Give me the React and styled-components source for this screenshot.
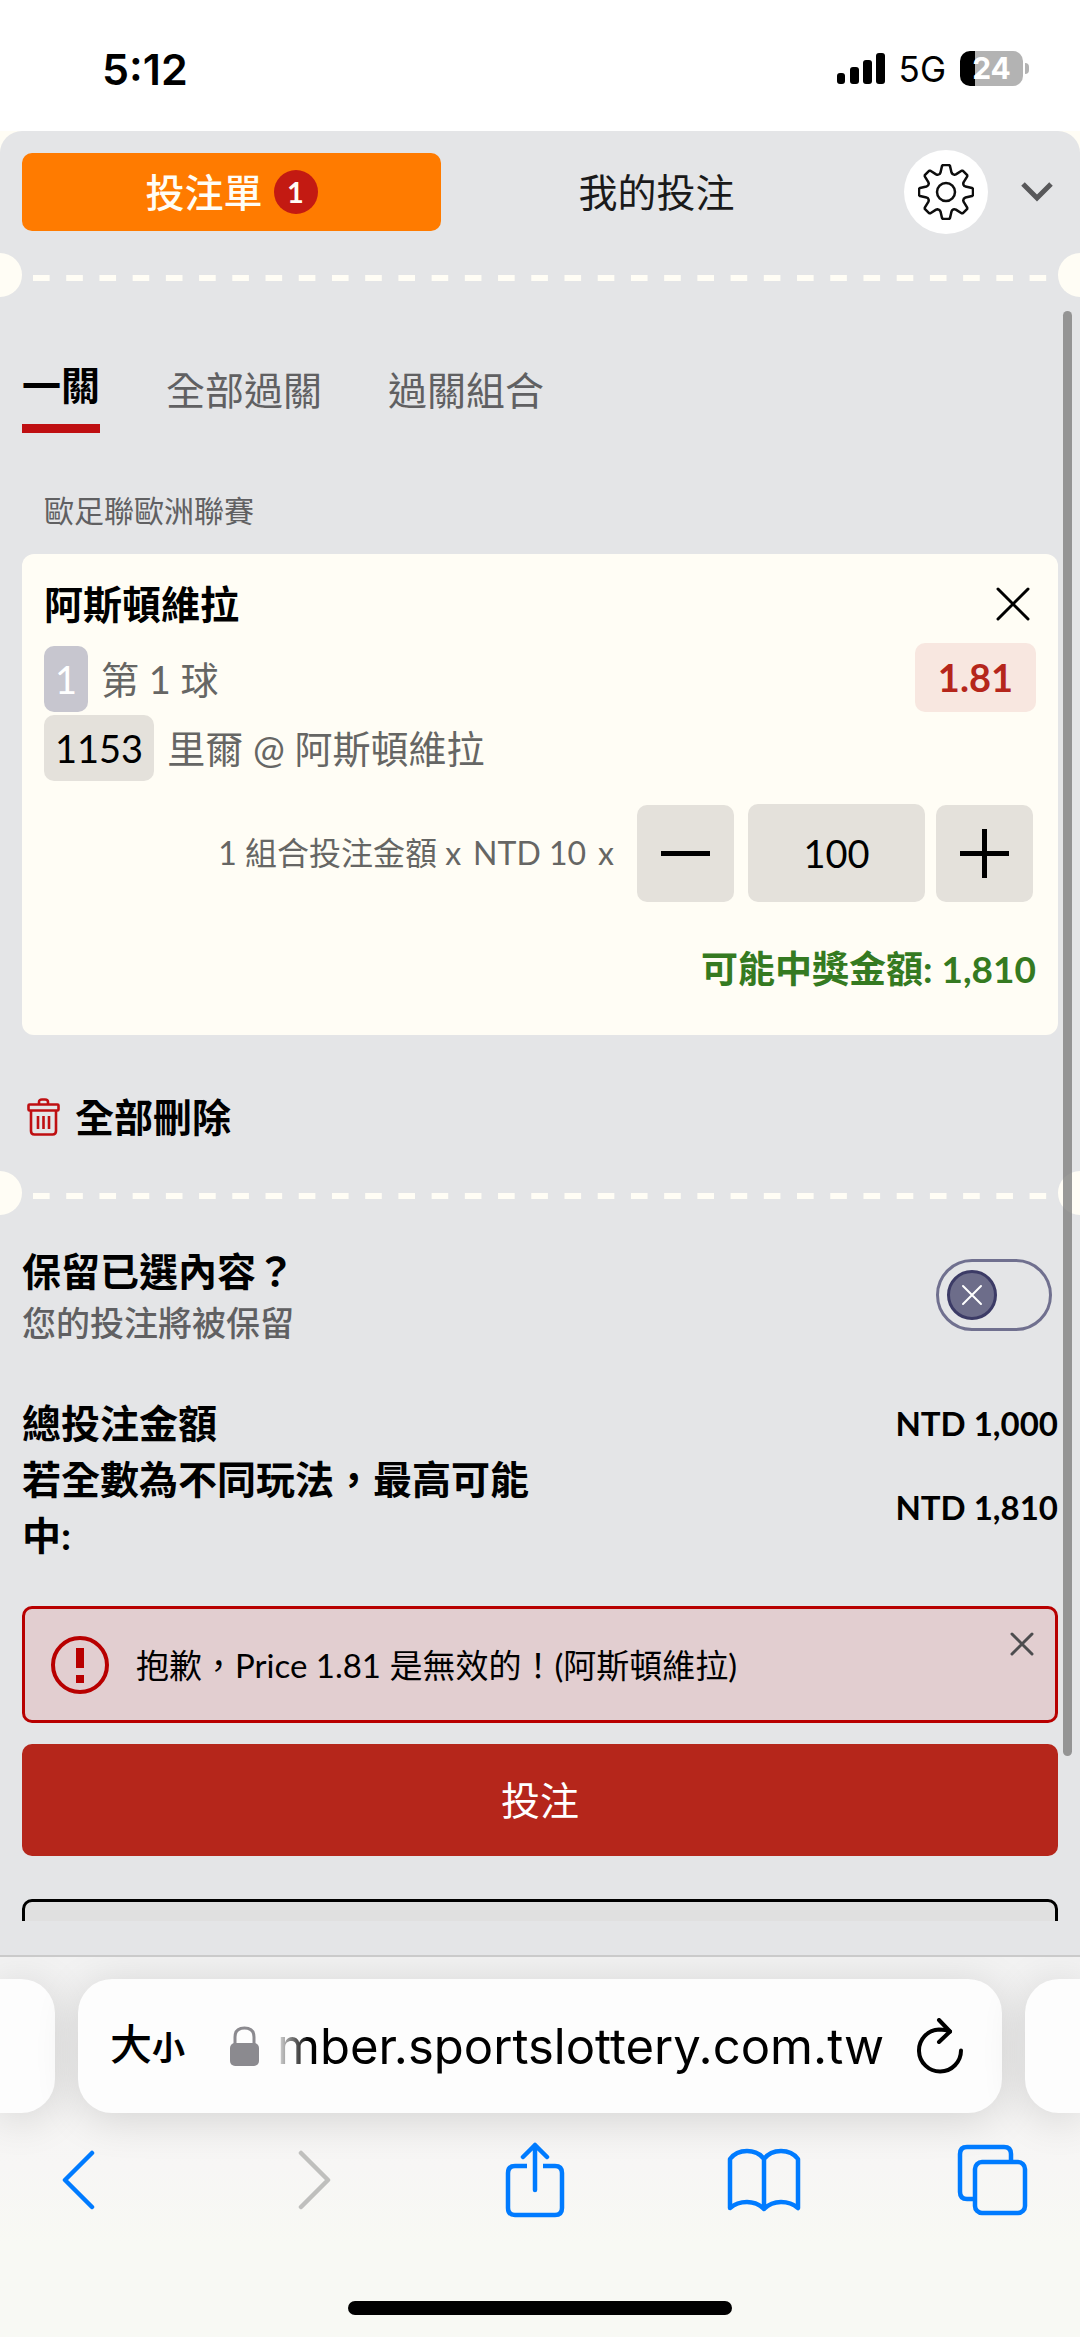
import React, { useState } from 'react'
import styled, { createGlobalStyle } from 'styled-components'

const GlobalStyle = createGlobalStyle`
  * {
    box-sizing: border-box;
  }
  body {
    margin: 0;
    background: #fffdf5;
    color: #000000;
    font-family: Lato, "Noto Sans CJK TC", sans-serif;
    font-size: 39px;
    line-height: 56px;
  }
  button,
  input {
    margin: 0;
    padding: 0;
    border: 0;
    background: none;
    color: inherit;
    font: inherit;
  }
  svg {
    display: block;
    flex: none;
  }
`

const Screen = styled.div`
  display: flex;
  flex-direction: column;
  height: 100vh;
`

/* ---------- status bar ---------- */

const StatusBar = styled.div`
  display: flex;
  align-items: center;
  justify-content: space-between;
  height: 131px;
  padding: 6px 51px 0 102px;
  background: #ffffff;
  font-family: Inter, "Liberation Sans", sans-serif;
`

const Clock = styled.span`
  font-size: 43px;
  font-weight: 600;
`

const StatusRight = styled.div`
  display: flex;
  align-items: center;
  gap: 14px;
`

const Network = styled.span`
  font-size: 35px;
`

const Battery = styled.div`
  position: relative;
  width: 63px;
  height: 35px;
  margin-right: 6px;
  border-radius: 10px;
  background: linear-gradient(90deg, #000000 24%, #b3b3b3 24%);
  color: #ffffff;
  font-size: 30px;
  font-weight: 700;
  line-height: 35px;
  text-align: center;
  &::after {
    content: '';
    position: absolute;
    top: 12px;
    right: -6px;
    width: 4px;
    height: 11px;
    border-radius: 0 4px 4px 0;
    background: #b3b3b3;
  }
`

/* ---------- bet slip ---------- */

const Panel = styled.main`
  display: flex;
  flex: 1;
  flex-direction: column;
  min-height: 0;
  padding-bottom: 34px;
  border-radius: 22px 22px 0 0;
  background: #e4e5e7;
`

const PanelHeader = styled.header`
  display: flex;
  align-items: center;
  padding: 19px 27px 19px 22px;
`

const SlipTabs = styled.div`
  display: grid;
  flex: 1;
  grid-template-columns: 1fr 1fr;
  gap: 6px;
`

const SlipTab = styled.button`
  display: flex;
  align-items: center;
  justify-content: center;
  gap: 11px;
  height: 78px;
  border-radius: 10px;
  background: ${({ $active }) => ($active ? '#ff7b00' : 'transparent')};
  color: ${({ $active }) => ($active ? '#fffdf5' : '#1a1a1a')};
  font-weight: ${({ $active }) => ($active ? 500 : 400)};
`

const Count = styled.span`
  width: 44px;
  height: 44px;
  border-radius: 50%;
  background: #c31a12;
  color: #fffdf5;
  font-size: 29px;
  font-weight: 700;
  line-height: 44px;
`

const GearButton = styled.button`
  display: flex;
  align-items: center;
  justify-content: center;
  width: 84px;
  height: 84px;
  margin: 0 33px 0 38px;
  border-radius: 50%;
  background: #ffffff;
`

const Perforation = styled.div`
  position: relative;
  flex: none;
  height: 44px;
  overflow: hidden;
  &::before,
  &::after {
    content: '';
    position: absolute;
    top: 0;
    width: 44px;
    height: 44px;
    border-radius: 50%;
    background: #fffdf5;
  }
  &::before {
    left: -22px;
  }
  &::after {
    right: -22px;
  }
`

const Dashes = styled.div`
  height: 6px;
  margin: 22px 17px 0 33px;
  background-image: linear-gradient(90deg, #fffdf5 51%, transparent 51%);
  background-size: 33px 6px;
  background-repeat: round no-repeat;
`

const SlipBody = styled.div`
  position: relative;
  flex: 1;
  min-height: 0;
  overflow: hidden;
`

const ScrollThumb = styled.div`
  position: absolute;
  top: 14px;
  right: 8px;
  width: 9px;
  height: 89%;
  border-radius: 5px;
  background: rgba(128, 128, 128, 0.8);
`

const ModeTabs = styled.nav`
  display: flex;
  align-items: center;
  gap: 66px;
  margin: 60px 22px 0;
`

const ModeTab = styled.button`
  padding-bottom: 11px;
  border-bottom: ${({ $active }) => ($active ? '9px solid #bf0f12' : '0')};
  color: ${({ $active }) => ($active ? '#000000' : '#606062')};
  font-weight: ${({ $active }) => ($active ? 700 : 400)};
`

const League = styled.p`
  margin: 57px 44px 24px;
  color: #606062;
  font-size: 30px;
  line-height: 40px;
`

const Card = styled.section`
  margin: 0 22px;
  padding: 22px 22px 38px;
  border-radius: 12px;
  background: #fffdf5;
`

const CardHead = styled.div`
  display: flex;
  align-items: center;
  justify-content: space-between;
`

const CardTitle = styled.h2`
  margin: 0;
  font-size: 39px;
  font-weight: 700;
`

const CloseButton = styled.button`
  padding: 0 6px;
`

const SelectionRow = styled.div`
  display: flex;
  align-items: flex-end;
  justify-content: space-between;
  margin-top: ${({ $first }) => ($first ? '11px' : '3px')};
  font-size: 38px;
`

const Selection = styled.div`
  display: flex;
  align-items: center;
  gap: 13px;
  color: #666664;
`

const Chip = styled.span`
  height: 66px;
  padding: 0 11px;
  border-radius: 10px;
  background: ${({ $muted }) => ($muted ? '#c7c6cf' : '#e4e1db')};
  color: ${({ $muted }) => ($muted ? '#ffffff' : '#000000')};
  line-height: 66px;
`

const Odds = styled.span`
  height: 69px;
  padding: 0 23px;
  border-radius: 10px;
  background: #f8e7e0;
  color: #b5261b;
  font-weight: 700;
  line-height: 69px;
`

const StakeRow = styled.div`
  display: flex;
  align-items: center;
  justify-content: flex-end;
  margin: 23px 3px 0 0;
`

const StakeLabel = styled.label`
  display: flex;
  gap: 12px;
  margin-right: 23px;
  color: #666664;
  font-size: 32px;
`

const StepButton = styled.button`
  display: flex;
  align-items: center;
  justify-content: center;
  width: 97px;
  height: 97px;
  border-radius: 10px;
  background: #e4e1db;
`

const StakeInput = styled.input`
  width: 177px;
  height: 98px;
  margin: 0 11px 0 14px;
  border-radius: 10px;
  background: #e4e1db;
  font-size: 38px;
  text-align: center;
`

const Payout = styled.p`
  margin: 39px 0 0;
  color: #357a21;
  font-size: 37px;
  font-weight: 700;
  text-align: right;
`

const ClearButton = styled.button`
  display: flex;
  align-items: center;
  gap: 15px;
  margin: 54px 27px 26px;
  font-weight: 700;
`

const KeepRow = styled.div`
  display: flex;
  align-items: center;
  justify-content: space-between;
  margin: 28px 28px 0 22px;
`

const KeepLabel = styled.label`
  display: flex;
  flex-direction: column;
  font-weight: 700;
`

const KeepHint = styled.span`
  color: #606062;
  font-size: 34px;
  font-weight: 500;
  line-height: 48px;
`

const Switch = styled.span`
  position: relative;
  display: flex;
  align-items: center;
  justify-content: ${({ $on }) => ($on ? 'flex-end' : 'flex-start')};
  width: 116px;
  height: 72px;
  padding: 0 8px;
  border: 3px solid #70708f;
  border-radius: 36px;
`

const SwitchInput = styled.input.attrs({ type: 'checkbox' })`
  position: absolute;
  inset: 0;
  width: 100%;
  height: 100%;
  margin: 0;
  opacity: 0;
`

const Knob = styled.span`
  display: flex;
  align-items: center;
  justify-content: center;
  width: 50px;
  height: 50px;
  border: 3px solid #3c3b66;
  border-radius: 50%;
  background: #6d6d8a;
  color: #ffffff;
`

const Totals = styled.dl`
  margin: 48px 22px 43px;
  font-weight: 700;
`

const TotalRow = styled.div`
  display: flex;
  align-items: center;
  justify-content: space-between;
`

const TotalLabel = styled.dt`
  width: 50%;
`

const TotalValue = styled.dd`
  margin: 0;
  font-size: 33px;
`

const Alert = styled.div`
  display: flex;
  align-items: center;
  height: 117px;
  margin: 0 22px 21px;
  padding: 0 21px 0 25px;
  border: 3px solid #b80000;
  border-radius: 10px;
  background: #e2ced0;
  font-size: 33px;
`

const AlertText = styled.p`
  flex: 1;
  margin: 0 0 0 26px;
`

const AlertClose = styled.button`
  align-self: flex-start;
  margin-top: 23px;
  color: #4d4d4f;
`

const PlaceBet = styled.button`
  display: block;
  width: calc(100% - 44px);
  height: 112px;
  margin: 0 22px 43px;
  border-radius: 10px;
  background: #b5261b;
  color: #ffffff;
`

const SecondaryButton = styled(PlaceBet)`
  border: 3px solid #000000;
  background: #e0e0e0;
`

/* ---------- browser chrome ---------- */

const BrowserBar = styled.footer`
  display: flex;
  flex-direction: column;
  align-items: center;
  border-top: 2px solid #cacaca;
  background: linear-gradient(#f2f2f2, #f7f6f5 55%, #f8f9f4 75%);
  font-family: Inter, "Noto Sans CJK TC", sans-serif;
  overflow: hidden;
`

const AddressRow = styled.div`
  display: flex;
  gap: 23px;
  width: 100%;
  padding: 22px 0 0;
`

const Pill = styled.div`
  height: 134px;
  background: #fdfdfd;
  box-shadow: 0 6px 44px rgba(0, 0, 0, 0.14);
`

const SidePill = styled(Pill)`
  width: 55px;
  border-radius: ${({ $left }) => ($left ? '0 34px 34px 0' : '34px 0 0 34px')};
`

const AddressPill = styled(Pill)`
  display: flex;
  flex: 1;
  align-items: center;
  min-width: 0;
  padding: 0 38px 0 32px;
  border-radius: 34px;
`

const TextSize = styled.button`
  display: flex;
  align-items: baseline;
  margin-right: 45px;
  font-size: 42px;
  font-weight: 500;
`

const SmallGlyph = styled.span`
  font-size: 33px;
  font-weight: 700;
`

const Address = styled.input`
  flex: 1;
  min-width: 0;
  height: 80px;
  margin: 0 32px 0 14px;
  font-size: 49px;
  text-align: right;
  mask-image: linear-gradient(90deg, transparent, #000000 36px);
`

const ToolBar = styled.nav`
  display: flex;
  align-items: center;
  justify-content: space-between;
  width: 100%;
  height: 134px;
  padding: 0 50px 0 40px;
`

const ToolButton = styled.button`
  display: flex;
  justify-content: center;
  width: 76px;
  color: ${({ disabled }) => (disabled ? '#bfbfbd' : '#007bff')};
`

const HomeIndicator = styled.div`
  width: 384px;
  height: 14px;
  margin: 54px 0 22px;
  border-radius: 7px;
  background: #000000;
`

/* ---------- icons ---------- */

const point = (x, y, turn) => {
  const a = (turn * Math.PI) / 4
  const px = 28 + x * Math.cos(a) - y * Math.sin(a)
  const py = 28 + x * Math.sin(a) + y * Math.cos(a)
  return `${px.toFixed(2)} ${py.toFixed(2)}`
}

// one tooth per eighth turn: flat tip, then a short valley to the next tooth
const gearPath = 'M' + [0, 1, 2, 3, 4, 5, 6, 7].map(i => (
  `${point(-5.5, -19.5, i)}L${point(-4, -26, i)}L${point(-3, -27, i)}` +
  `L${point(3, -27, i)}L${point(4, -26, i)}L${point(5.5, -19.5, i)}` +
  `Q${point(6.2, -17.4, i)} ${point(8.4, -17.2, i)}`
)).join('L') + 'Z'

const GearIcon = () => (
  <svg width="56" height="56" viewBox="0 0 56 56" fill="none" stroke="#0d0d0d" strokeWidth="2.5" strokeLinejoin="round">
    <path d={gearPath} />
    <circle cx="28" cy="28" r="9" />
  </svg>
)

const CrossIcon = ({ size, stroke }) => (
  <svg width={size} height={size} viewBox={`0 0 ${size} ${size}`} fill="none" stroke="currentColor" strokeWidth={stroke} strokeLinecap="round">
    <path d={`M2 2L${size - 2} ${size - 2}M${size - 2} 2L2 ${size - 2}`} />
  </svg>
)

const TrashIcon = () => (
  <svg width="33" height="38" viewBox="0 0 33 38" fill="none" stroke="#bf0f12" strokeWidth="2.6" strokeLinejoin="round">
    <path d="M12 6V4Q12 1.500 15 1.500H18Q21 1.500 21 4V6" />
    <rect x="1.500" y="6.500" width="30" height="6" rx="1" />
    <path d="M4 12.500V33Q4 36.500 7.500 36.500H25.500Q29 36.500 29 33V12.500" />
    <path d="M11 18V31M16.500 18V31M22 18V31" />
  </svg>
)

const SignalIcon = () => (
  <svg width="48" height="31" viewBox="0 0 48 31">
    <rect x="0" y="20" width="8" height="11" rx="3" />
    <rect x="13" y="14" width="9" height="17" rx="3" />
    <rect x="26" y="7" width="9" height="24" rx="3" />
    <rect x="39" y="0" width="9" height="31" rx="3" />
  </svg>
)

const LockIcon = () => (
  <svg width="29" height="41" viewBox="0 0 29 41">
    <path d="M5 20V11Q5 2 14.500 2Q24 2 24 11V20" fill="none" stroke="#8b8a8f" strokeWidth="3" />
    <rect x="0" y="17" width="29" height="23" rx="5" fill="#8b8a8f" />
  </svg>
)

const ReloadIcon = () => (
  <svg width="48" height="56" viewBox="0 0 48 56" fill="none" stroke="#000000" strokeWidth="4" strokeLinecap="round" strokeLinejoin="round">
    <path d="M34 13.500C30 11.500 26 11.500 23 11.500A21 21 0 1 0 45 32.500" />
    <path d="M23 2L34 13.500L23 24" />
  </svg>
)

const ToolSvg = ({ width, height, children }) => (
  <svg width={width} height={height} viewBox={`0 0 ${width} ${height}`} fill="none" stroke="currentColor" strokeWidth="4.500" strokeLinecap="round" strokeLinejoin="round">
    {children}
  </svg>
)

const Divider = () => (
  <Perforation>
    <Dashes />
  </Perforation>
)

const modes = ['一關', '全部過關', '過關組合']

const App = () => {
  const [mode, setMode] = useState(modes[0])
  const [stake, setStake] = useState(100)
  const [keep, setKeep] = useState(false)

  return (
    <Screen lang="zh-Hant">
      <GlobalStyle />
      <StatusBar>
        <Clock>5:12</Clock>
        <StatusRight>
          <SignalIcon />
          <Network>5G</Network>
          <Battery>24</Battery>
        </StatusRight>
      </StatusBar>

      <Panel>
        <PanelHeader>
          <SlipTabs>
            <SlipTab $active>
              投注單
              <Count>1</Count>
            </SlipTab>
            <SlipTab>我的投注</SlipTab>
          </SlipTabs>
          <GearButton aria-label="設定">
            <GearIcon />
          </GearButton>
          <button aria-label="收合">
            <svg width="32" height="20" viewBox="0 0 32 20" fill="none" stroke="#58585a" strokeWidth="5">
              <path d="M2 2L16 16L30 2" />
            </svg>
          </button>
        </PanelHeader>
        <Divider />

        <SlipBody>
          <ModeTabs>
            {modes.map(name => (
              <ModeTab key={name} $active={name === mode} onClick={() => setMode(name)}>
                {name}
              </ModeTab>
            ))}
          </ModeTabs>

          <League>歐足聯歐洲聯賽</League>

          <Card>
            <CardHead>
              <CardTitle>阿斯頓維拉</CardTitle>
              <CloseButton aria-label="移除">
                <CrossIcon size={34} stroke={3} />
              </CloseButton>
            </CardHead>
            <SelectionRow $first>
              <Selection>
                <Chip $muted>1</Chip>
                第 1 球
              </Selection>
              <Odds>1.81</Odds>
            </SelectionRow>
            <SelectionRow>
              <Selection>
                <Chip>1153</Chip>
                里爾 @ 阿斯頓維拉
              </Selection>
            </SelectionRow>
            <StakeRow>
              <StakeLabel htmlFor="stake">
                <span>1 組合投注金額 x</span>
                <span>NTD 10</span>
                <span>x</span>
              </StakeLabel>
              <StepButton aria-label="減少" onClick={() => setStake(Math.max(0, stake - 1))}>
                <svg width="49" height="49" viewBox="0 0 49 49" stroke="#000000" strokeWidth="5">
                  <path d="M0 24.500H49" />
                </svg>
              </StepButton>
              <StakeInput id="stake" value={stake} onChange={e => setStake(Number(e.target.value) || 0)} />
              <StepButton aria-label="增加" onClick={() => setStake(stake + 1)}>
                <svg width="49" height="49" viewBox="0 0 49 49" stroke="#000000" strokeWidth="5">
                  <path d="M0 24.500H49M24.500 0V49" />
                </svg>
              </StepButton>
            </StakeRow>
            <Payout>可能中獎金額: 1,810</Payout>
          </Card>

          <ClearButton>
            <TrashIcon />
            全部刪除
          </ClearButton>
          <Divider />

          <KeepRow>
            <KeepLabel htmlFor="keep">
              保留已選內容？
              <KeepHint>您的投注將被保留</KeepHint>
            </KeepLabel>
            <Switch $on={keep}>
              <Knob>
                <CrossIcon size={22} stroke={2} />
              </Knob>
              <SwitchInput id="keep" checked={keep} onChange={() => setKeep(!keep)} />
            </Switch>
          </KeepRow>

          <Totals>
            <TotalRow>
              <TotalLabel>總投注金額</TotalLabel>
              <TotalValue>NTD 1,000</TotalValue>
            </TotalRow>
            <TotalRow>
              <TotalLabel>若全數為不同玩法，最高可能中:</TotalLabel>
              <TotalValue>NTD 1,810</TotalValue>
            </TotalRow>
          </Totals>

          <Alert role="alert">
            <svg width="60" height="60" viewBox="0 0 60 60" fill="none" stroke="#b80000">
              <circle cx="30" cy="30" r="27" strokeWidth="4" />
              <path d="M30 13V33M30 40V48" strokeWidth="8" />
            </svg>
            <AlertText>抱歉，Price 1.81 是無效的！(阿斯頓維拉)</AlertText>
            <AlertClose aria-label="關閉">
              <CrossIcon size={24} stroke={3} />
            </AlertClose>
          </Alert>

          <PlaceBet>投注</PlaceBet>
          <SecondaryButton aria-label="取消" />
          <ScrollThumb />
        </SlipBody>
      </Panel>

      <BrowserBar>
        <AddressRow>
          <SidePill $left />
          <AddressPill>
            <TextSize>
              大<SmallGlyph>小</SmallGlyph>
            </TextSize>
            <LockIcon />
            <Address aria-label="網址" defaultValue="mber.sportslottery.com.tw" />
            <button aria-label="重新載入">
              <ReloadIcon />
            </button>
          </AddressPill>
          <SidePill />
        </AddressRow>
        <ToolBar>
          <ToolButton aria-label="上一頁">
            <ToolSvg width={34} height={60}>
              <path d="M31 3L4 30L31 57" />
            </ToolSvg>
          </ToolButton>
          <ToolButton aria-label="下一頁" disabled>
            <ToolSvg width={50} height={60}>
              <path d="M19 3L46 30L19 57" />
            </ToolSvg>
          </ToolButton>
          <ToolButton aria-label="分享">
            <ToolSvg width={60} height={76}>
              <path d="M30 3V48M18 15L30 3L42 15" />
              <path strokeLinecap="butt" d="M22 24H10Q3 24 3 31V66Q3 73 10 73H50Q57 73 57 66V31Q57 24 50 24H38" />
            </ToolSvg>
          </ToolButton>
          <ToolButton aria-label="書籤">
            <ToolSvg width={74} height={66}>
              <path d="M37 12Q31 4 20 4Q9 4 3 12V61Q10 55 20 55Q30 55 37 62Q44 55 54 55Q64 55 71 61V12Q65 4 54 4Q43 4 37 12V62" />
            </ToolSvg>
          </ToolButton>
          <ToolButton aria-label="分頁">
            <ToolSvg width={71} height={72}>
              <path strokeLinecap="butt" d="M54 18V10Q54 3 47 3H10Q3 3 3 10V48Q3 55 10 55H18" />
              <rect x="18" y="18" width="50" height="51" rx="7" />
            </ToolSvg>
          </ToolButton>
        </ToolBar>
        <HomeIndicator />
      </BrowserBar>
    </Screen>
  )
}

export default App
